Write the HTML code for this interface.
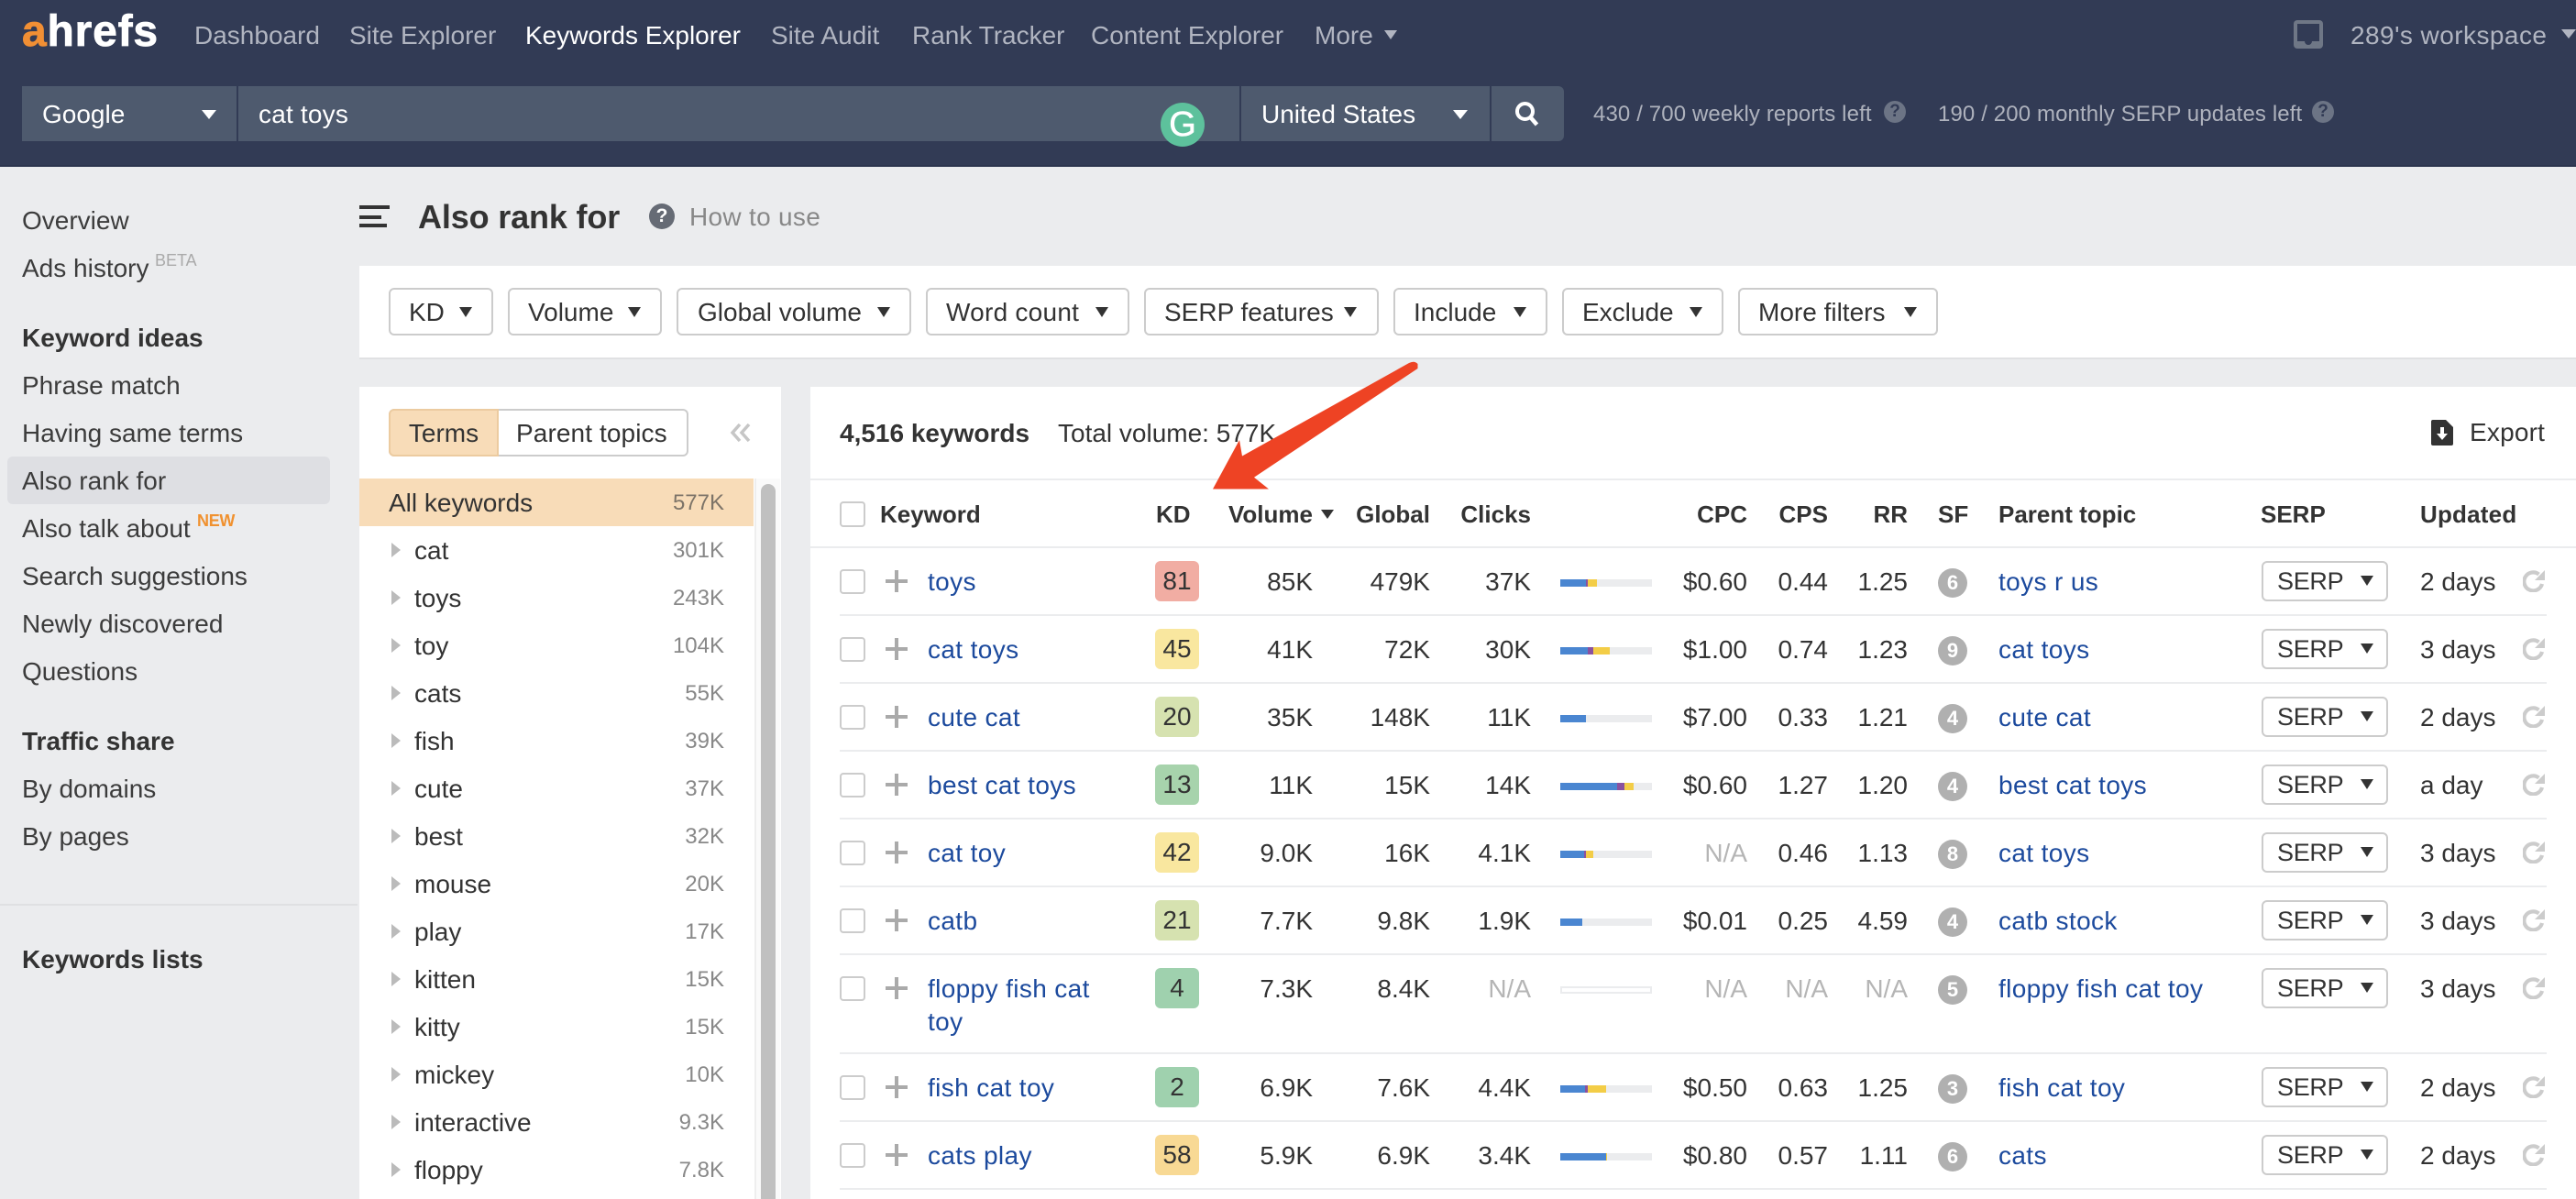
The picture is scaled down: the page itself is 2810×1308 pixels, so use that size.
<!DOCTYPE html>
<html><head><meta charset="utf-8"><title>Also rank for</title>
<style>
*{box-sizing:border-box}
html,body{margin:0;padding:0}
body{width:2810px;height:1308px;overflow:hidden;position:relative;background:#ebecee;font-family:"Liberation Sans",sans-serif;font-size:28px;color:#333}
.a{position:absolute;white-space:nowrap}
.tri{position:absolute;width:0;height:0;border-left:7.5px solid transparent;border-right:7.5px solid transparent;border-top:11px solid #333}
.nav{top:12px;line-height:54px;color:#b1b5c1}
.sc{position:absolute;top:94px;height:60px;background:#4e5a6e}
.st{top:94px;line-height:62px;color:#fff}
.rep{top:98px;line-height:54px;font-size:24px;color:#aeb2bd;letter-spacing:.12px}
.s{left:24px;line-height:54px;color:#3c3c3c}
.b{font-weight:700;color:#333}
.btn{position:absolute;top:314px;height:52px;border:2px solid #ccc;border-radius:6px;line-height:50px;padding-left:20px;background:#fff;white-space:nowrap;color:#333}
.btn .tri{right:21px;top:19px}
.li{position:absolute;left:392px;width:430px;height:52px;line-height:54px}
.li .t{position:absolute;left:60px}
.li .v{position:absolute;right:32px;font-size:24px;color:#888}
.li i{position:absolute;left:35px;top:18px;width:0;height:0;border-top:8px solid transparent;border-bottom:8px solid transparent;border-left:10px solid #bbb}
.h{top:524px;line-height:74px;font-size:26px;font-weight:700;color:#333}
.r{position:absolute;left:0;width:2810px;height:74px;line-height:74px}
.r>*{position:absolute;top:0;white-space:nowrap}
.r .ck{left:916px;top:23px;width:28px;height:27px;border:2px solid #ccc;border-radius:4px}
.r .p1{left:966px;top:34px;width:24px;height:4px;background:#aaa}
.r .p2{left:976px;top:24px;width:4px;height:24px;background:#aaa}
.r a{color:#1c4a9d;letter-spacing:.37px}
.r .k{left:1012px}
.r .d{left:1260px;top:14px;width:48px;height:44px;border-radius:6px;line-height:44px;text-align:center}
.r .vo{right:1378px}.r .gl{right:1250px}.r .cl{right:1140px}
.r .cpc{right:904px}.r .cps{right:816px}.r .rr{right:729px}
.na{color:#b5b5b5}
.r .bar{left:1702px;top:34px;width:100px;height:8px;background:#ebecee;display:flex}
.bar u{display:block;height:8px}
.u1{background:#4a86d1}.u2{background:#8a519f}.u3{background:#f3cd47}
.r .sf{left:2114px;top:22px;width:32px;height:32px;border-radius:50%;background:#b0b0b0;color:#fff;font-size:22px;font-weight:700;line-height:32px;text-align:center}
.r .pt{left:2180px}
.r .sb{left:2467px;top:14px;width:138px;height:44px;border:2px solid #ccc;border-radius:6px;line-height:40px;padding-left:15px;background:#fff;font-size:27px;letter-spacing:-.3px}
.sb .tri{left:106px;top:14px}
.r .up{left:2640px}
.r svg{left:2752px;top:24px}
.sep{position:absolute;left:916px;width:1862px;height:2px;background:#ebecee}
</style></head><body>

<!-- header -->
<div class="a" style="left:0;top:0;width:2810px;height:182px;background:#323b55;border-bottom:2px solid #2c354e"></div>
<div class="a" style="left:24px;top:1px;line-height:68px;font-size:48px;font-weight:700;color:#fff;letter-spacing:.8px;-webkit-text-stroke:.8px currentColor"><span style="color:#f18f34">a</span>hrefs</div>
<div class="a nav" style="left:212px">Dashboard</div>
<div class="a nav" style="left:381px">Site Explorer</div>
<div class="a nav" style="left:573px;color:#fff">Keywords Explorer</div>
<div class="a nav" style="left:841px">Site Audit</div>
<div class="a nav" style="left:995px">Rank Tracker</div>
<div class="a nav" style="left:1190px">Content Explorer</div>
<div class="a nav" style="left:1434px">More</div>
<div class="tri" style="left:1510px;top:33px;border-top-color:#b1b5c1;border-top-width:10px"></div>
<svg class="a" style="left:2502px;top:22px" width="32" height="31" viewBox="0 0 32 31"><path fill="#6f7786" d="M4 0h24a4 4 0 0 1 4 4v23a4 4 0 0 1-4 4H4a4 4 0 0 1-4-4V4a4 4 0 0 1 4-4z"/><path fill="#323b55" d="M4 4h24v19h-8a4 4 0 0 1-8 0H4z"/></svg>
<div class="a nav" style="left:2564px;letter-spacing:.45px">289's workspace</div>
<div class="tri" style="left:2794px;top:32px;border-top-color:#b1b5c1;border-top-width:10px;border-left-width:8px;border-right-width:8px"></div>

<div class="sc" style="left:24px;width:234px"></div>
<div class="sc" style="left:260px;width:1092px"></div>
<div class="sc" style="left:1354px;width:271px"></div>
<div class="sc" style="left:1627px;width:79px;border-radius:0 6px 6px 0"></div>
<div class="a st" style="left:46px">Google</div>
<div class="tri" style="left:220px;top:120px;border-top-color:#fff;border-top-width:10px;border-left-width:8px;border-right-width:8px"></div>
<div class="a st" style="left:282px;letter-spacing:.2px">cat toys</div>
<div class="a" style="left:1266px;top:112px;width:48px;height:48px;border-radius:50%;background:#5dc19c"></div>
<div class="a" style="left:1266px;top:112px;width:48px;line-height:48px;text-align:center;color:#fff;font-size:38px;-webkit-text-stroke:.6px #fff">G</div>
<div class="a st" style="left:1376px">United States</div>
<div class="tri" style="left:1585px;top:120px;border-top-color:#fff;border-top-width:10px;border-left-width:8px;border-right-width:8px"></div>
<svg class="a" style="left:1652px;top:110px" width="28" height="28" viewBox="0 0 28 28"><circle cx="11.500" cy="11.500" r="8.500" fill="none" stroke="#fff" stroke-width="4"/><path d="M17.500 18l7 8" stroke="#fff" stroke-width="4.500" fill="none"/></svg>
<div class="a rep" style="left:1738px">430 / 700 weekly reports left</div>
<div class="a" style="left:2055px;top:110px;width:24px;height:24px;border-radius:50%;background:#6c7485;color:#323b55;font-size:19px;font-weight:700;line-height:24px;text-align:center">?</div>
<div class="a rep" style="left:2114px">190 / 200 monthly SERP updates left</div>
<div class="a" style="left:2522px;top:110px;width:24px;height:24px;border-radius:50%;background:#6c7485;color:#323b55;font-size:19px;font-weight:700;line-height:24px;text-align:center">?</div>

<!-- sidebar -->
<div class="a" style="left:8px;top:498px;width:352px;height:52px;border-radius:6px;background:#dedfe3"></div>
<div class="a s" style="top:214px">Overview</div>
<div class="a s" style="top:266px">Ads history</div>
<div class="a" style="left:169px;top:272px;font-size:18px;line-height:24px;color:#aaa">BETA</div>
<div class="a s b" style="top:342px">Keyword ideas</div>
<div class="a s" style="top:394px">Phrase match</div>
<div class="a s" style="top:446px">Having same terms</div>
<div class="a s" style="top:498px">Also rank for</div>
<div class="a s" style="top:550px">Also talk about</div>
<div class="a" style="left:215px;top:556px;font-size:18px;line-height:24px;color:#f0912f;font-weight:700;letter-spacing:-.3px">NEW</div>
<div class="a s" style="top:602px">Search suggestions</div>
<div class="a s" style="top:654px">Newly discovered</div>
<div class="a s" style="top:706px">Questions</div>
<div class="a s b" style="top:782px">Traffic share</div>
<div class="a s" style="top:834px">By domains</div>
<div class="a s" style="top:886px">By pages</div>
<div class="a" style="left:0;top:986px;width:390px;height:2px;background:#dfe0e2"></div>
<div class="a s b" style="top:1020px">Keywords lists</div>

<!-- title -->
<div class="a" style="left:392px;top:224px;width:33px;height:4px;background:#333"></div>
<div class="a" style="left:392px;top:235px;width:24px;height:4px;background:#333"></div>
<div class="a" style="left:392px;top:244px;width:30px;height:4px;background:#333"></div>
<div class="a" style="left:456px;top:209px;line-height:56px;font-size:36px;font-weight:700;color:#333;letter-spacing:-.15px">Also rank for</div>
<div class="a" style="left:708px;top:222px;width:28px;height:28px;border-radius:50%;background:#666b75;color:#fff;font-size:21px;font-weight:700;line-height:28px;text-align:center">?</div>
<div class="a" style="left:752px;top:211px;line-height:52px;color:#888;letter-spacing:.3px">How to use</div>

<!-- filters -->
<div class="a" style="left:392px;top:290px;width:2418px;height:102px;background:#fff;border-bottom:2px solid #e0e1e3"></div>
<div class="btn" style="left:424px;width:114px">KD<span class="tri"></span></div>
<div class="btn" style="left:554px;width:168px">Volume<span class="tri"></span></div>
<div class="btn" style="left:738px;width:256px;padding-left:21px">Global volume<span class="tri"></span></div>
<div class="btn" style="left:1010px;width:222px;letter-spacing:.25px">Word count<span class="tri"></span></div>
<div class="btn" style="left:1248px;width:256px">SERP features<span class="tri" style="right:22px"></span></div>
<div class="btn" style="left:1520px;width:168px">Include<span class="tri"></span></div>
<div class="btn" style="left:1704px;width:176px">Exclude<span class="tri"></span></div>
<div class="btn" style="left:1896px;width:218px">More filters<span class="tri"></span></div>

<!-- left panel -->
<div class="a" style="left:392px;top:422px;width:460px;height:886px;background:#fff"></div>
<div class="a" style="left:424px;top:446px;width:327px;height:52px;border:2px solid #ccc;border-radius:6px;background:#fff"></div>
<div class="a" style="left:424px;top:446px;width:120px;height:52px;border:2px solid #eccba0;border-radius:6px 0 0 6px;background:#f8dcb8;line-height:50px;text-align:center">Terms</div>
<div class="a" style="left:563px;top:446px;line-height:54px;letter-spacing:.1px">Parent topics</div>
<svg class="a" style="left:796px;top:461px" width="24" height="22" viewBox="0 0 24 22"><path d="M11 2l-8 9 8 9M21 2l-8 9 8 9" fill="none" stroke="#c6c6c6" stroke-width="3.500"/></svg>
<div class="a" style="left:823px;top:522px;width:28px;height:786px;background:#fafafa;border-left:2px solid #eee"></div>
<div class="a" style="left:830px;top:528px;width:16px;height:780px;background:#c0c0c0;border-radius:8px 8px 0 0"></div>
<div class="li" style="top:522px;background:#f8dcb8"><span style="position:absolute;left:32px">All keywords</span><span class="v" style="color:#7d7468">577K</span></div>
<div class="li" style="top:574px"><i></i><span class="t">cat</span><span class="v">301K</span></div>
<div class="li" style="top:626px"><i></i><span class="t">toys</span><span class="v">243K</span></div>
<div class="li" style="top:678px"><i></i><span class="t">toy</span><span class="v">104K</span></div>
<div class="li" style="top:730px"><i></i><span class="t">cats</span><span class="v">55K</span></div>
<div class="li" style="top:782px"><i></i><span class="t">fish</span><span class="v">39K</span></div>
<div class="li" style="top:834px"><i></i><span class="t">cute</span><span class="v">37K</span></div>
<div class="li" style="top:886px"><i></i><span class="t">best</span><span class="v">32K</span></div>
<div class="li" style="top:938px"><i></i><span class="t">mouse</span><span class="v">20K</span></div>
<div class="li" style="top:990px"><i></i><span class="t">play</span><span class="v">17K</span></div>
<div class="li" style="top:1042px"><i></i><span class="t">kitten</span><span class="v">15K</span></div>
<div class="li" style="top:1094px"><i></i><span class="t">kitty</span><span class="v">15K</span></div>
<div class="li" style="top:1146px"><i></i><span class="t">mickey</span><span class="v">10K</span></div>
<div class="li" style="top:1198px"><i></i><span class="t">interactive</span><span class="v">9.3K</span></div>
<div class="li" style="top:1250px"><i></i><span class="t">floppy</span><span class="v">7.8K</span></div>

<!-- right panel -->
<div class="a" style="left:884px;top:422px;width:1926px;height:886px;background:#fff"></div>
<div class="a" style="left:916px;top:447px;line-height:52px;font-weight:700">4,516 keywords</div>
<div class="a" style="left:1154px;top:447px;line-height:52px">Total volume: 577K</div>
<svg class="a" style="left:2652px;top:458px" width="24" height="28" viewBox="0 0 24 28"><path fill="#333" d="M2 0h14l8 8v18a2 2 0 0 1-2 2H2a2 2 0 0 1-2-2V2a2 2 0 0 1 2-2z"/><path fill="#fff" d="M10 8h4v7h4l-6 7-6-7h4z"/></svg>
<div class="a" style="left:2694px;top:446px;line-height:52px;letter-spacing:.2px">Export</div>
<div class="a" style="left:884px;top:522px;width:1926px;height:2px;background:#ebecee"></div>
<div class="a" style="left:884px;top:596px;width:1926px;height:2px;background:#ebecee"></div>

<div class="a" style="left:916px;top:547px;width:28px;height:28px;border:2px solid #ccc;border-radius:4px"></div>
<div class="a h" style="left:960px">Keyword</div>
<div class="a h" style="left:1261px">KD</div>
<div class="a h" style="left:1340px">Volume</div>
<div class="tri" style="left:1441px;top:556px;border-left-width:7px;border-right-width:7px;border-top-width:10px"></div>
<div class="a h" style="right:1250px">Global</div>
<div class="a h" style="right:1140px">Clicks</div>
<div class="a h" style="right:904px">CPC</div>
<div class="a h" style="right:816px">CPS</div>
<div class="a h" style="right:729px">RR</div>
<div class="a h" style="left:2114px">SF</div>
<div class="a h" style="left:2180px">Parent topic</div>
<div class="a h" style="left:2466px">SERP</div>
<div class="a h" style="left:2640px;letter-spacing:.2px">Updated</div>

<div class="r" style="top:598px"><span class="ck"></span><span class="p1"></span><span class="p2"></span><a class="k">toys</a><span class="d" style="background:#f1ada3">81</span><span class="vo">85K</span><span class="gl">479K</span><span class="cl">37K</span><span class="bar"><u class="u1" style="width:28px"></u><u class="u2" style="width:2px"></u><u class="u3" style="width:10px"></u></span><span class="cpc">$0.60</span><span class="cps">0.44</span><span class="rr">1.25</span><span class="sf">6</span><a class="pt">toys r us</a><span class="sb">SERP<b class="tri"></b></span><span class="up">2 days</span><svg width="24" height="24" viewBox="0 0 24 24"><path d="M21 15a10 10 0 1 1-3.500-10.500" fill="none" stroke="#ccc" stroke-width="4.200"/><path d="M24 0v11H13z" fill="#ccc"/></svg></div>
<div class="sep" style="top:670px"></div>
<div class="r" style="top:672px"><span class="ck"></span><span class="p1"></span><span class="p2"></span><a class="k">cat toys</a><span class="d" style="background:#f9e79f">45</span><span class="vo">41K</span><span class="gl">72K</span><span class="cl">30K</span><span class="bar"><u class="u1" style="width:30px"></u><u class="u2" style="width:6px"></u><u class="u3" style="width:18px"></u></span><span class="cpc">$1.00</span><span class="cps">0.74</span><span class="rr">1.23</span><span class="sf">9</span><a class="pt">cat toys</a><span class="sb">SERP<b class="tri"></b></span><span class="up">3 days</span><svg width="24" height="24" viewBox="0 0 24 24"><path d="M21 15a10 10 0 1 1-3.500-10.500" fill="none" stroke="#ccc" stroke-width="4.200"/><path d="M24 0v11H13z" fill="#ccc"/></svg></div>
<div class="sep" style="top:744px"></div>
<div class="r" style="top:746px"><span class="ck"></span><span class="p1"></span><span class="p2"></span><a class="k">cute cat</a><span class="d" style="background:#d6e2b0">20</span><span class="vo">35K</span><span class="gl">148K</span><span class="cl">11K</span><span class="bar"><u class="u1" style="width:28px"></u></span><span class="cpc">$7.00</span><span class="cps">0.33</span><span class="rr">1.21</span><span class="sf">4</span><a class="pt">cute cat</a><span class="sb">SERP<b class="tri"></b></span><span class="up">2 days</span><svg width="24" height="24" viewBox="0 0 24 24"><path d="M21 15a10 10 0 1 1-3.500-10.500" fill="none" stroke="#ccc" stroke-width="4.200"/><path d="M24 0v11H13z" fill="#ccc"/></svg></div>
<div class="sep" style="top:818px"></div>
<div class="r" style="top:820px"><span class="ck"></span><span class="p1"></span><span class="p2"></span><a class="k">best cat toys</a><span class="d" style="background:#a7d3ac">13</span><span class="vo">11K</span><span class="gl">15K</span><span class="cl">14K</span><span class="bar"><u class="u1" style="width:62px"></u><u class="u2" style="width:8px"></u><u class="u3" style="width:10px"></u></span><span class="cpc">$0.60</span><span class="cps">1.27</span><span class="rr">1.20</span><span class="sf">4</span><a class="pt">best cat toys</a><span class="sb">SERP<b class="tri"></b></span><span class="up">a day</span><svg width="24" height="24" viewBox="0 0 24 24"><path d="M21 15a10 10 0 1 1-3.500-10.500" fill="none" stroke="#ccc" stroke-width="4.200"/><path d="M24 0v11H13z" fill="#ccc"/></svg></div>
<div class="sep" style="top:892px"></div>
<div class="r" style="top:894px"><span class="ck"></span><span class="p1"></span><span class="p2"></span><a class="k">cat toy</a><span class="d" style="background:#f9e79f">42</span><span class="vo">9.0K</span><span class="gl">16K</span><span class="cl">4.1K</span><span class="bar"><u class="u1" style="width:26px"></u><u class="u2" style="width:2px"></u><u class="u3" style="width:8px"></u></span><span class="cpc na">N/A</span><span class="cps">0.46</span><span class="rr">1.13</span><span class="sf">8</span><a class="pt">cat toys</a><span class="sb">SERP<b class="tri"></b></span><span class="up">3 days</span><svg width="24" height="24" viewBox="0 0 24 24"><path d="M21 15a10 10 0 1 1-3.500-10.500" fill="none" stroke="#ccc" stroke-width="4.200"/><path d="M24 0v11H13z" fill="#ccc"/></svg></div>
<div class="sep" style="top:966px"></div>
<div class="r" style="top:968px"><span class="ck"></span><span class="p1"></span><span class="p2"></span><a class="k">catb</a><span class="d" style="background:#d6e2b0">21</span><span class="vo">7.7K</span><span class="gl">9.8K</span><span class="cl">1.9K</span><span class="bar"><u class="u1" style="width:24px"></u></span><span class="cpc">$0.01</span><span class="cps">0.25</span><span class="rr">4.59</span><span class="sf">4</span><a class="pt">catb stock</a><span class="sb">SERP<b class="tri"></b></span><span class="up">3 days</span><svg width="24" height="24" viewBox="0 0 24 24"><path d="M21 15a10 10 0 1 1-3.500-10.500" fill="none" stroke="#ccc" stroke-width="4.200"/><path d="M24 0v11H13z" fill="#ccc"/></svg></div>
<div class="sep" style="top:1040px"></div>
<div class="r" style="top:1042px"><span class="ck"></span><span class="p1"></span><span class="p2"></span><a class="k">floppy fish cat</a><a class="k" style="top:36px">toy</a><span class="d" style="background:#9fd1ae">4</span><span class="vo">7.3K</span><span class="gl">8.4K</span><span class="cl na">N/A</span><span class="bar" style="background:#fff;border:2px solid #ebecee"></span><span class="cpc na">N/A</span><span class="cps na">N/A</span><span class="rr na">N/A</span><span class="sf">5</span><a class="pt">floppy fish cat toy</a><span class="sb">SERP<b class="tri"></b></span><span class="up">3 days</span><svg width="24" height="24" viewBox="0 0 24 24"><path d="M21 15a10 10 0 1 1-3.500-10.500" fill="none" stroke="#ccc" stroke-width="4.200"/><path d="M24 0v11H13z" fill="#ccc"/></svg></div>
<div class="sep" style="top:1148px"></div>
<div class="r" style="top:1150px"><span class="ck"></span><span class="p1"></span><span class="p2"></span><a class="k">fish cat toy</a><span class="d" style="background:#9fd1ae">2</span><span class="vo">6.9K</span><span class="gl">7.6K</span><span class="cl">4.4K</span><span class="bar"><u class="u1" style="width:27px"></u><u class="u2" style="width:3px"></u><u class="u3" style="width:20px"></u></span><span class="cpc">$0.50</span><span class="cps">0.63</span><span class="rr">1.25</span><span class="sf">3</span><a class="pt">fish cat toy</a><span class="sb">SERP<b class="tri"></b></span><span class="up">2 days</span><svg width="24" height="24" viewBox="0 0 24 24"><path d="M21 15a10 10 0 1 1-3.500-10.500" fill="none" stroke="#ccc" stroke-width="4.200"/><path d="M24 0v11H13z" fill="#ccc"/></svg></div>
<div class="sep" style="top:1222px"></div>
<div class="r" style="top:1224px"><span class="ck"></span><span class="p1"></span><span class="p2"></span><a class="k">cats play</a><span class="d" style="background:#f8d994">58</span><span class="vo">5.9K</span><span class="gl">6.9K</span><span class="cl">3.4K</span><span class="bar"><u class="u1" style="width:50px"></u><u class="u3" style="width:1px"></u></span><span class="cpc">$0.80</span><span class="cps">0.57</span><span class="rr">1.11</span><span class="sf">6</span><a class="pt">cats</a><span class="sb">SERP<b class="tri"></b></span><span class="up">2 days</span><svg width="24" height="24" viewBox="0 0 24 24"><path d="M21 15a10 10 0 1 1-3.500-10.500" fill="none" stroke="#ccc" stroke-width="4.200"/><path d="M24 0v11H13z" fill="#ccc"/></svg></div>
<div class="sep" style="top:1296px"></div>

<!-- arrow -->
<svg class="a" style="left:0;top:0" width="2810" height="1308" viewBox="0 0 2810 1308"><path fill="#ee4324" d="M1537 396Q1543 393 1546.500 397L1546.500 402L1368 520.700 1384 533.500H1323L1352 480 1355 497.500Z" /></svg>
</body></html>
